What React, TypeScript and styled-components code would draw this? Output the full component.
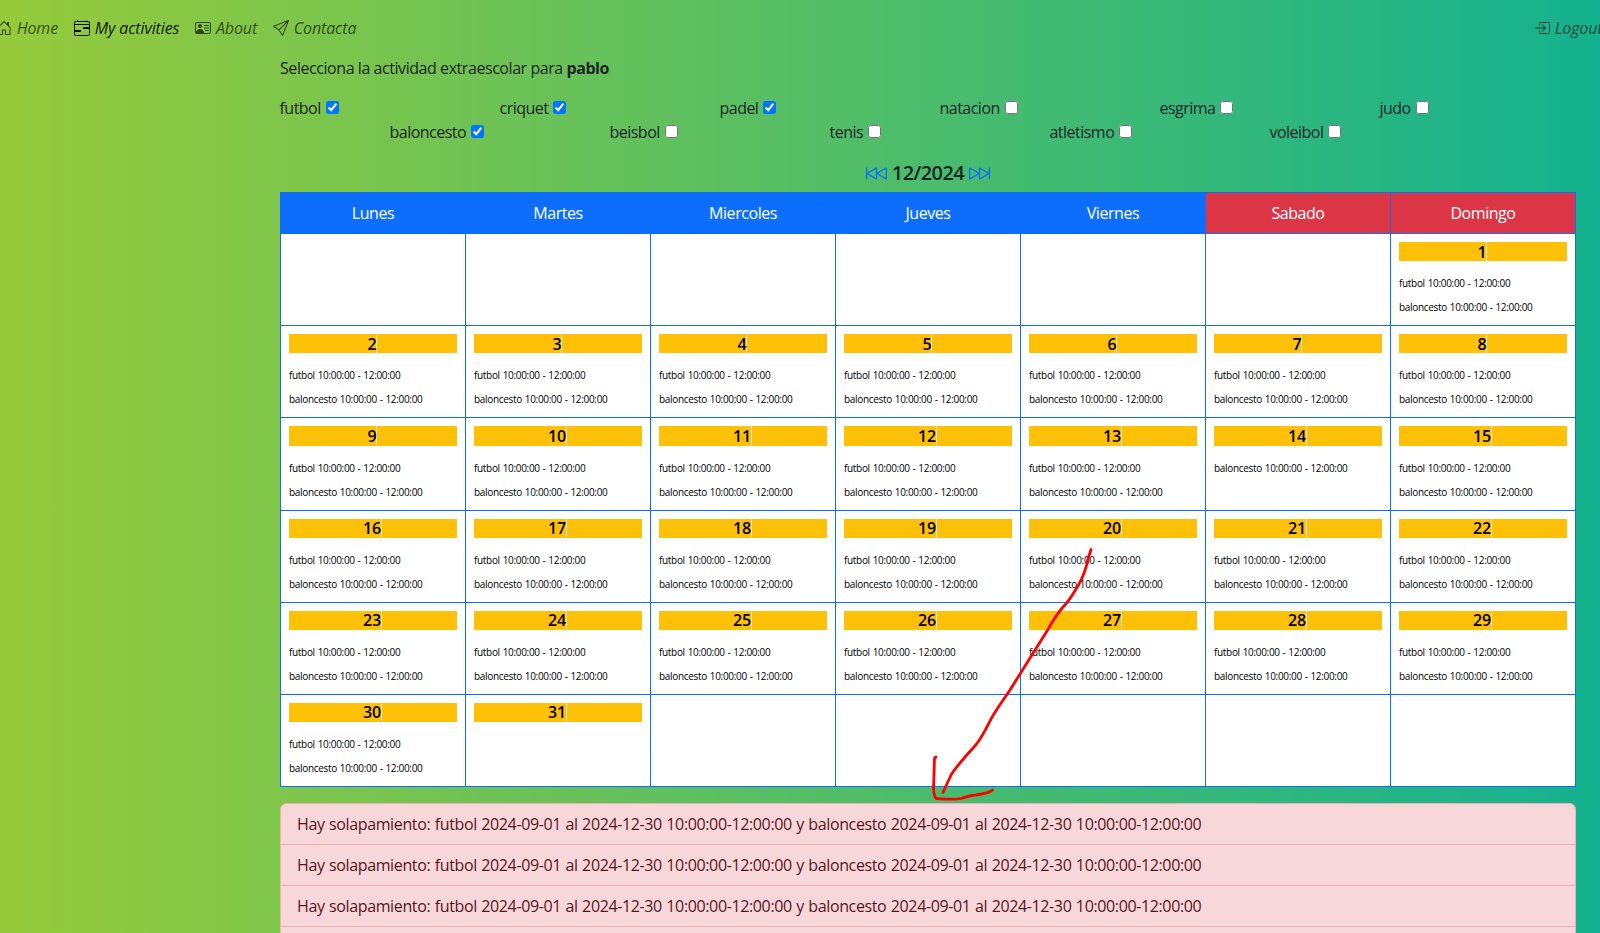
import React from "react";
import styled, { createGlobalStyle } from "styled-components";
import {
  BsBoxArrowInRight,
  BsCalendar4Range,
  BsHouseDoor,
  BsPersonVcard,
  BsSend,
  BsSkipBackward,
  BsSkipForward,
} from "react-icons/bs";

const GlobalStyle = createGlobalStyle`
  *, *::before, *::after { box-sizing: border-box; }
  body {
    margin: 0;
    overflow: hidden;
    font-family: "Open Sans", "Noto Sans", sans-serif;
    font-size: 16px;
    line-height: 24px;
    color: #212529;
  }
  p, h5 { margin: 0; }
`;

const Page = styled.div`
  position: relative;
  height: 933px;
  overflow: hidden;
  background: linear-gradient(90deg, #96ca3b, #14b28f);
`;

const Navbar = styled.nav`
  display: flex;
  justify-content: space-between;
  height: 56px;
  margin: 0 -10.5px 0 -12px;
  padding: 8px 0;
  font-style: italic;
`;

const NavGroup = styled.div`
  display: flex;
`;

const NavLink = styled.a<{ $active?: boolean }>`
  display: flex;
  gap: 4.7px;
  padding: 8px;
  letter-spacing: -0.12px;
  white-space: nowrap;
  color: rgba(0, 0, 0, ${(p) => (p.$active ? 0.9 : 0.65)});

  svg {
    flex: none;
    margin-top: 4px;
  }
`;

const Main = styled.main`
  width: 1296px;
  margin-left: 280px;
`;

const Prompt = styled.p`
  margin-bottom: 16px;
  letter-spacing: -0.44px;
`;

const ActivityGrid = styled.div`
  display: grid;
  grid-template-columns: repeat(12, 110px);
  grid-template-rows: 24px 24px;
  width: 1320px;
  margin: 0 0 16px -0.5px;
`;

const Activity = styled.label<{ $index: number }>`
  grid-row: ${(p) => (p.$index % 2) + 1};
  grid-column: ${(p) => p.$index + 1};
  letter-spacing: -0.52px;
  white-space: nowrap;

  input {
    width: 13px;
    height: 13px;
    margin: 0 0 0 5px;
    accent-color: #0075ff;
  }
`;

const MonthBar = styled.h5`
  display: flex;
  align-items: center;
  justify-content: center;
  gap: 5px;
  height: 24px;
  margin-bottom: 8px;
  font-size: 20px;
  font-weight: 600;
  line-height: 24px;
  letter-spacing: -0.58px;

  span {
    padding-top: 2px;
  }

  svg {
    width: 21px;
    height: 21px;
    margin-top: 2px;
    color: #0d6efd;
  }
`;

const Calendar = styled.div`
  display: grid;
  grid-template-columns: repeat(7, 1fr);
  border: solid #0d6efd;
  border-width: 1px 0 0 1px;
  background: #fff;
`;

const Weekday = styled.div<{ $weekend: boolean }>`
  height: 41px;
  padding: 8px;
  border: solid #0d6efd;
  border-width: 0 1px 1px 0;
  background: ${(p) => (p.$weekend ? "#dc3545" : "#0d6efd")};
  color: #fff;
  text-align: center;
  letter-spacing: -0.44px;
`;

const DayCell = styled.div`
  height: 92.2px;
  padding: 8px;
  border: solid #0d6efd;
  border-width: 0 1px 1px 0;
  color: #000;
`;

const DayNumber = styled.div`
  display: flex;
  justify-content: center;
  height: 19.2px;
  margin-bottom: 8px;
  background: #ffc107;
  font-weight: 600;
  line-height: 21.6px;
  letter-spacing: -0.2px;

  span {
    height: 20.5px;
    margin: -0.5px 1px 0 0;
    border-right: 1px solid #dee2e6;
  }
`;

const Slot = styled.p`
  height: 24px;
  font-size: 10px;
  line-height: 29px;
  letter-spacing: -0.32px;
  word-spacing: 0.6px;
  white-space: nowrap;
`;

const AlertList = styled.div`
  margin-top: 16px;
  overflow: hidden;
  border: 1px solid #f1aeb5;
  border-radius: 6px;
`;

const AlertItem = styled.div`
  height: 41px;
  padding: 8px 16px;
  border-bottom: 1px solid #f1aeb5;
  background: #f8d7da;
  color: #58151c;
  letter-spacing: -0.37px;
  word-spacing: 0.65px;
`;

const Annotation = styled.svg`
  position: absolute;
  top: 0;
  left: 0;
  pointer-events: none;
`;

const ACTIVITIES = [
  "futbol", "baloncesto", "criquet", "beisbol", "padel", "tenis",
  "natacion", "atletismo", "esgrima", "voleibol", "judo",
];
const SELECTED = ["futbol", "baloncesto", "criquet", "padel"];
const WEEKDAYS = ["Lunes", "Martes", "Miercoles", "Jueves", "Viernes", "Sabado", "Domingo"];
const OVERLAP =
  "Hay solapamiento: futbol 2024-09-01 al 2024-12-30 10:00:00-12:00:00 y baloncesto 2024-09-01 al 2024-12-30 10:00:00-12:00:00";

const slotsFor = (day: number) => {
  if (day === 31) return [];
  if (day === 14) return ["baloncesto"];
  return ["futbol", "baloncesto"];
};

export default function App() {
  const days = Array.from({ length: 42 }, (_, i) => i - 5);
  return (
    <Page>
      <GlobalStyle />
      <Navbar>
        <NavGroup>
          <NavLink><BsHouseDoor />Home</NavLink>
          <NavLink $active><BsCalendar4Range />My activities</NavLink>
          <NavLink><BsPersonVcard />About</NavLink>
          <NavLink><BsSend />Contacta</NavLink>
        </NavGroup>
        <NavGroup>
          <NavLink><BsBoxArrowInRight />Logout</NavLink>
        </NavGroup>
      </Navbar>
      <Main>
        <Prompt>
          Selecciona la actividad extraescolar para <b>pablo</b>
        </Prompt>
        <ActivityGrid>
          {ACTIVITIES.map((name, i) => (
            <Activity key={name} $index={i}>
              {name}
              <input type="checkbox" defaultChecked={SELECTED.includes(name)} />
            </Activity>
          ))}
        </ActivityGrid>
        <MonthBar>
          <BsSkipBackward />
          <span>12/2024</span>
          <BsSkipForward />
        </MonthBar>
        <Calendar>
          {WEEKDAYS.map((name, i) => (
            <Weekday key={name} $weekend={i > 4}>{name}</Weekday>
          ))}
          {days.map((day) => (
            <DayCell key={day}>
              {day >= 1 && day <= 31 && (
                <>
                  <DayNumber><span>{day}</span></DayNumber>
                  {slotsFor(day).map((name) => (
                    <Slot key={name}>{name} 10:00:00 - 12:00:00</Slot>
                  ))}
                </>
              )}
            </DayCell>
          ))}
        </Calendar>
        <AlertList>
          {[1, 2, 3, 4].map((n) => (
            <AlertItem key={n}>{OVERLAP}</AlertItem>
          ))}
        </AlertList>
      </Main>
      <Annotation width="1600" height="933" fill="none" stroke="#f00" strokeWidth="2.8" strokeLinecap="round" strokeLinejoin="round">
        <path d="M1091 549.5L1088 559C1086 569 1083 577 1079 584C1073 594 1070 600 1063 607C1056 615 1051 624 1047 631L1030 658L1010 690C1002 702 994 712 989 723C983 734 980 741 973 748C964 758 956 767 951 775L943 792.5" />
        <path d="M936 757L934.5 758C934 770 934 779 933.5 787C933.5 793 935 797 936 798.5C945 799 954 800 961 798.5C967 797 970 795 976 795C983 794 990 793 992.5 790" />
      </Annotation>
    </Page>
  );
}
